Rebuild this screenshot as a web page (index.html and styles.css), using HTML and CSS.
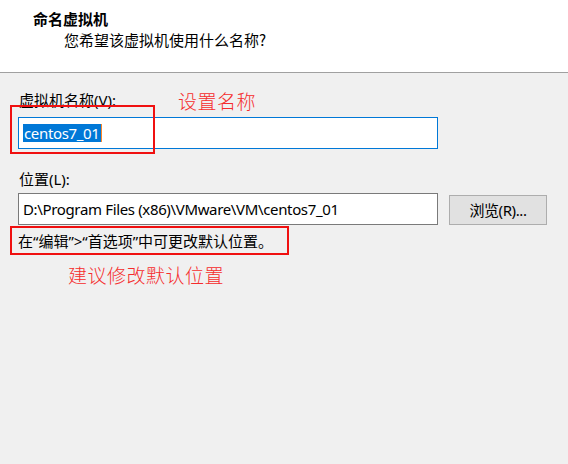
FILE: index.html
```html
<!DOCTYPE html>
<html lang="zh-CN">
<head>
<meta charset="utf-8">
<title>命名虚拟机</title>
<link rel="stylesheet" href="styles.css">
</head>
<body>
<div class="header">
  <div class="title">命名虚拟机</div>
  <div class="subtitle">您希望该虚拟机使用什么名称?</div>
</div>
<div class="content">
  <div class="label label-name">虚拟机名称(V):</div>
  <div class="input input-focus"><span class="sel">centos7_01</span><span class="caret"></span></div>
  <div class="label label-loc">位置(L):</div>
  <div class="row">
    <div class="input">D:\Program Files (x86)\VMware\VM\centos7_01</div>
    <div class="button">浏览(R)...</div>
  </div>
  <div class="note">在“编辑”&gt;“首选项”中可更改默认位置。</div>
  <div class="anno-text anno-bottom">建议修改默认位置</div>

  <div class="anno-text anno-name">设置名称</div>
  <div class="anno-box box-name"></div>
  <div class="anno-box box-note"></div>
</div>
</body>
</html>
```

FILE: styles.css
```css
html, body {
  margin: 0;
  padding: 0;
}
body {
  width: 568px;
  height: 464px;
  background: #f0f0f0;
  font-family: "Noto Sans", "Noto Sans CJK SC", sans-serif;
  font-size: 15px;
  color: #000;
  overflow: hidden;
}
.header {
  background: #fff;
  border-bottom: 1px solid #a0a0a0;
  box-sizing: border-box;
  height: 73px;
  padding-top: 9px;
}
.title {
  font-family: "Noto Sans CJK SC", sans-serif;
  font-weight: 700;
  line-height: 20px;
  padding-left: 33px;
}
.subtitle {
  font-family: "Noto Sans CJK SC", sans-serif;
  line-height: 20px;
  margin-top: 1px;
  padding-left: 64px;
}
.content {
  position: relative;
  padding: 17px 0 0 18px;
}
.label {
  line-height: 20px;
  padding-left: 1px;
}
.label-name {
  margin-bottom: 7px;
}
.label-loc {
  margin-top: 20px;
  margin-bottom: 4px;
}
.input {
  box-sizing: border-box;
  width: 420px;
  height: 32px;
  border: 1px solid #7a7a7a;
  background: #fff;
  padding: 0 0 0 4px;
  line-height: 30px;
  white-space: nowrap;
  display: flex;
  align-items: center;
  letter-spacing: -0.35px;
}
.input-focus {
  border-color: #0078d7;
}
.sel {
  background: #0078d7;
  color: #fff;
  line-height: 18px;
  padding: 0 1px;
}
.caret {
  width: 1px;
  height: 18px;
  background: #ff8728;
}
.row {
  display: flex;
  align-items: center;
  gap: 11px;
}
.button {
  box-sizing: border-box;
  width: 98px;
  height: 30px;
  background: #e1e1e1;
  border: 1px solid #adadad;
  display: flex;
  align-items: center;
  justify-content: center;
  margin-top: 1px;
  letter-spacing: -0.4px;
}
.note {
  font-family: "Noto Sans", "Noto Sans CJK SC", sans-serif;
  line-height: 20px;
  margin-top: 6px;
}
.anno-text {
  font-family: "Noto Sans CJK SC", sans-serif;
  font-weight: 300;
  font-size: 19px;
  color: #f52c2c;
  line-height: 24px;
}
.anno-bottom {
  margin-top: 12px;
  padding-left: 50px;
  letter-spacing: 0.5px;
}
.anno-name {
  position: absolute;
  left: 178px;
  top: 16px;
  letter-spacing: 0.5px;
}
.anno-box {
  position: absolute;
  border: 2px solid #f01010;
  box-sizing: border-box;
}
.box-name {
  left: 10px;
  top: 32px;
  width: 145px;
  height: 49px;
}
.box-note {
  left: 10px;
  top: 153px;
  width: 279px;
  height: 29px;
}
```
